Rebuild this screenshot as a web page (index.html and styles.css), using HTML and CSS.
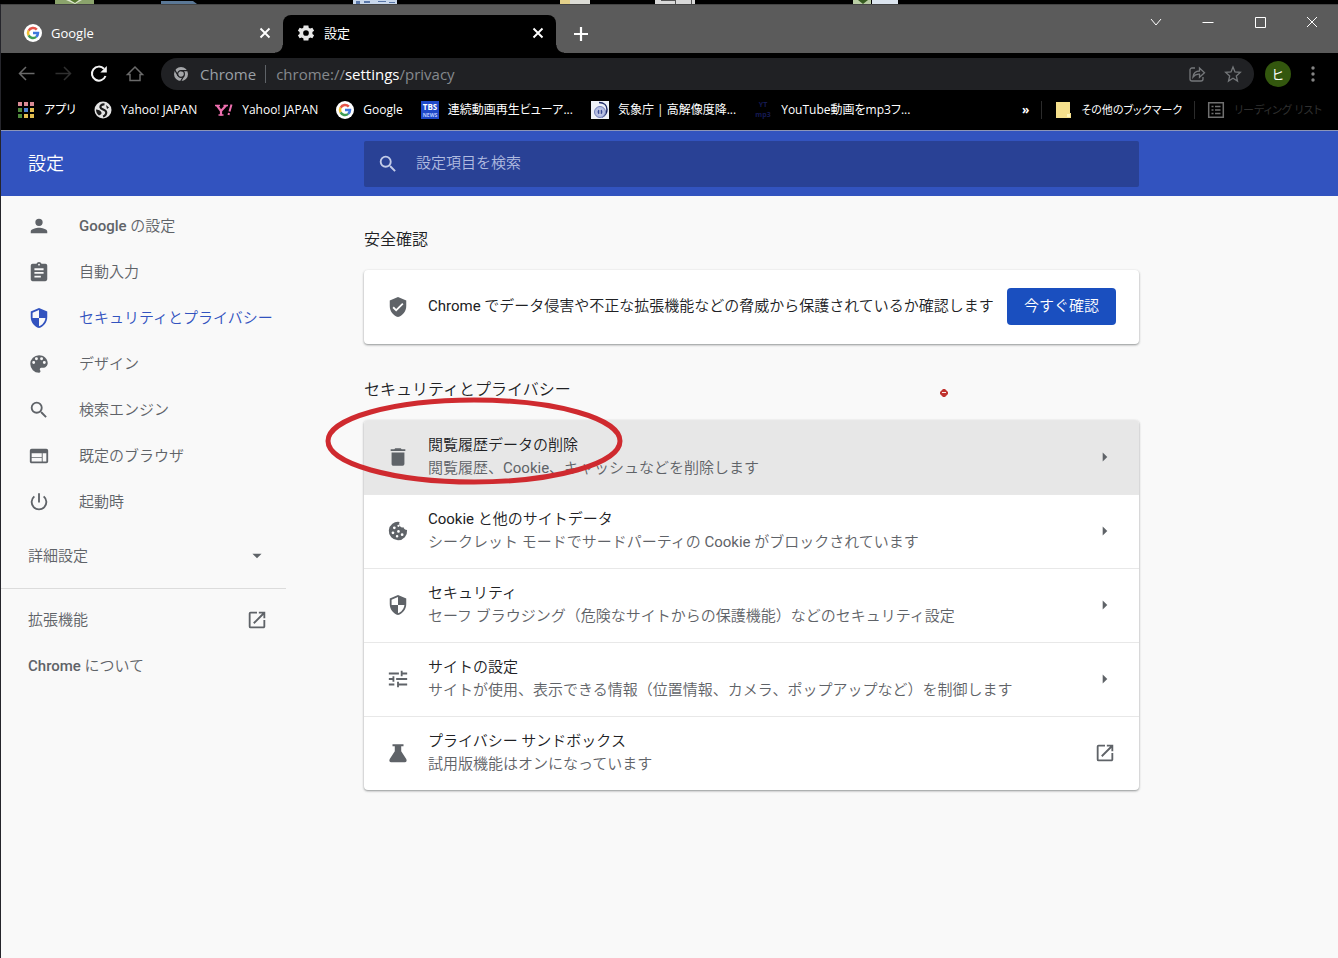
FILE: index.html
```html
<!DOCTYPE html>
<html lang="ja">
<head>
<meta charset="utf-8">
<title>設定</title>
<link rel="stylesheet" href="styles.css">
</head>
<body>
<svg class="defs" aria-hidden="true">
  <symbol id="google" viewBox="0 0 18 18">
    <circle cx="9" cy="9" r="9" fill="#fff"/>
    <g fill="none" stroke-width="2.5">
      <path d="M12.8 5.6A5 5 0 0 0 4.6 6.7" stroke="#e5554a"/>
      <path d="M4.6 6.7a5 5 0 0 0 0 4.7" stroke="#f0c030"/>
      <path d="M4.6 11.4a5 5 0 0 0 7.6 1.5" stroke="#3f9d55"/>
      <path d="M9 9.1h5a5 5 0 0 1-1.8 3.8" stroke="#3f78dd"/>
    </g>
  </symbol>
  <symbol id="close" viewBox="0 0 18 18"><path d="M4.500 4.500l9 9m0-9l-9 9" fill="none" stroke="currentColor" stroke-width="1.900"/></symbol>
  <symbol id="search" viewBox="0 0 24 24"><path d="M15.5 14h-.79l-.28-.27A6.47 6.47 0 0 0 16 9.5 6.5 6.5 0 1 0 9.5 16c1.61 0 3.09-.59 4.23-1.57l.27.28v.79l5 4.99L20.49 19l-4.99-5zm-6 0C7.01 14 5 11.99 5 9.5S7.01 5 9.5 5 14 7.01 14 9.5 11.99 14 9.5 14z"/></symbol>
  <symbol id="shield" viewBox="0 0 24 24"><path d="M12 1L3 5v6c0 5.55 3.84 10.74 9 12 5.16-1.26 9-6.45 9-12V5l-9-4zm0 10.99h7c-.53 4.12-3.28 7.79-7 8.94V12H5V6.3l7-3.11v8.8z"/></symbol>
  <symbol id="launch" viewBox="0 0 24 24"><path d="M19 19H5V5h7V3H5a2 2 0 0 0-2 2v14a2 2 0 0 0 2 2h14c1.1 0 2-.9 2-2v-7h-2v7zM14 3v2h3.59l-9.83 9.83 1.41 1.41L19 6.41V10h2V3h-7z"/></symbol>
  <symbol id="arrow" viewBox="0 0 24 24"><path d="M9.500 7l5 5-5 5z"/></symbol>
</svg>

<div class="desktop" aria-hidden="true">
  <svg width="900" height="4">
    <path fill="#8ba36c" d="M55 0h39v4H55z"/><path fill="#dfe8d0" d="M66 0h16l-7 4z"/><path fill="#55782f" d="M70 0h9l-4 3z"/>
    <path fill="#5b7896" d="M161 1h32l4 3h-36z"/>
    <path fill="#c9d8ec" d="M353 0h44v4h-44z"/><path fill="#5a77a8" d="M356 1h4v3h-4zm8 0h6v2h-6zm14 0h8v1h-8zm11 1h6v1h-6z"/>
    <path fill="#e3d08a" d="M560 0h10v4h-10z"/><path fill="#dcdcd6" d="M570 0h20v4h-20z"/>
    <path fill="#d8d8d8" d="M655 0h40v4h-40z"/><path fill="#555" d="M661 0h14v1h-14zm14 0h1v4h-1zm16 0h1v4h-1z"/>
    <path fill="#b9cda4" d="M853 0h18v4h-18z"/><path fill="#365b20" d="M858 0h10l-5 4z"/><path fill="#dbe4ee" d="M872 0h26v4h-26z"/>
  </svg>
</div>

<div class="window">
  <header class="chrome">
    <div class="tabstrip">
      <div class="tab">
        <svg class="favicon"><use href="#google"/></svg>
        <span class="tab-title">Google</span>
        <button class="tab-close" aria-label="閉じる"><svg><use href="#close"/></svg></button>
      </div>
      <div class="tab tab-active">
        <svg class="favicon" viewBox="0 0 24 24" fill="#e8e8e8"><path d="M20.500 13.200a8 8 0 0 0 0-2.400l2.300-1.800-2.300-4-2.800 1.100a8 8 0 0 0-2.100-1.200L15.200 2H8.800l-.4 2.900a8 8 0 0 0-2.100 1.200L3.500 5 1.200 9l2.300 1.800a8 8 0 0 0 0 2.400L1.200 15l2.300 4 2.800-1.100a8 8 0 0 0 2.100 1.200l.4 2.900h6.400l.4-2.900a8 8 0 0 0 2.100-1.200l2.800 1.100 2.300-4zM12 15.800a3.800 3.800 0 1 1 0-7.600 3.800 3.800 0 0 1 0 7.600z"/></svg>
        <span class="tab-title">設定</span>
        <button class="tab-close" aria-label="閉じる"><svg><use href="#close"/></svg></button>
      </div>
      <button class="new-tab" aria-label="新しいタブ"><svg viewBox="0 0 18 18"><path d="M9 2v14M2 9h14" stroke="#fff" stroke-width="2.200"/></svg></button>
      <div class="window-buttons">
        <button aria-label="タブを検索"><svg viewBox="0 0 14 14"><path d="M2 4l5 6 5-6"/></svg></button>
        <button aria-label="最小化"><svg viewBox="0 0 14 14"><path d="M1.500 7.500h11"/></svg></button>
        <button aria-label="最大化"><svg viewBox="0 0 14 14"><path d="M2.500 2.500h10v10h-10z"/></svg></button>
        <button aria-label="ウィンドウを閉じる"><svg viewBox="0 0 14 14"><path d="M2 2l10 10m0-10L2 12"/></svg></button>
      </div>
    </div>

    <div class="toolbar">
      <button class="tool" aria-label="戻る"><svg viewBox="0 0 20 20" stroke="#6a6a6a"><path d="M17.500 9.500h-15M9 3L2.500 9.500 9 16"/></svg></button>
      <button class="tool" aria-label="進む"><svg viewBox="0 0 20 20" stroke="#303030"><path d="M2.500 9.500h15M11 3l6.500 6.500L11 16"/></svg></button>
      <button class="tool" aria-label="再読み込み"><svg viewBox="0 0 20 20" stroke="#f4f4f4" stroke-width="2"><path d="M16.500 12a7 7 0 1 1-1.500-7.200"/><path d="M17.800 2v6.500h-6.500z" fill="#f4f4f4" stroke="none"/></svg></button>
      <button class="tool" aria-label="ホーム"><svg viewBox="0 0 20 20" stroke="#6a6a6a"><path d="M2.500 10.500L10 3l7.500 7.500h-2.500v6H5v-6z"/></svg></button>
      <div class="omnibox">
        <svg class="site-icon" viewBox="0 0 16 16"><circle cx="8" cy="8" r="7" fill="#a4a6a9"/><g stroke="#202124" stroke-width="1.200" fill="none"><circle cx="8" cy="8" r="3.400"/><path d="M8 4.600h7M5.100 9.700L1.600 3.600M10.900 9.700L7.400 15.800"/></g></svg>
        <span class="site-name">Chrome</span>
        <span class="url" role="textbox" aria-label="アドレス">chrome://<b>settings</b>/privacy</span>
        <button class="omni-button" aria-label="共有"><svg viewBox="0 0 18 18"><path d="M7 3H4a2 2 0 0 0-2 2v9a2 2 0 0 0 2 2h9a2 2 0 0 0 2-2v-2"/><path d="M5 12c.5-4 3-6 6.500-6V3l5 4.700-5 4.500v-3C8.500 9 6.500 10 5 12z"/></svg></button>
        <button class="omni-button" aria-label="ブックマーク"><svg viewBox="0 0 18 18"><path d="M9 2l2 5 5.300.4-4 3.500 1.200 5.200L9 13.300l-4.500 2.800 1.200-5.200-4-3.500L7 7z"/></svg></button>
      </div>
      <button class="avatar">ヒ</button>
      <button class="menu" aria-label="メニュー"><svg viewBox="0 0 18 18" fill="#858585"><circle cx="9" cy="3" r="1.700"/><circle cx="9" cy="9" r="1.700"/><circle cx="9" cy="15" r="1.700"/></svg></button>
    </div>

    <nav class="bookmarks">
      <a href="#"><svg viewBox="0 0 18 18"><path fill="#d98b95" d="M1 1h4v4H1zm6 0h4v4H7zm6 0h4v4h-4z"/><path fill="#4f8a3c" d="M1 7h4v4H1zm0 6h4v4H1z"/><path fill="#4a7fd0" d="M7 7h4v4H7z"/><path fill="#e2bd4f" d="M13 7h4v4h-4zm-6 6h4v4H7zm6 0h4v4h-4z"/></svg>アプリ</a>
      <a href="#"><svg viewBox="0 0 18 18"><circle cx="9" cy="9" r="8.500" fill="#e4e4e4"/><path fill="none" stroke="#1b1b1b" stroke-width="2.200" d="M10.500 3.500C8 3 6 4.500 6.500 6.500S11 8.500 12 10.500 11 15 9 15.500"/><path fill="#1b1b1b" d="M2 8.500c2 0 5 1 5.500 3S6 14 5 14.500C3 13 2 11 2 8.500zM12 4l3 2.500-2 1.500z"/></svg>Yahoo! JAPAN</a>
      <a href="#"><svg viewBox="0 0 18 18" fill="none" stroke="#ee6fae"><path stroke-width="2.200" d="M2 4.500l4 5.500v4.500M11 4.500L6 10"/><path stroke-width="1.400" d="M0 4.500h5M8.500 4.500h4.500M3.500 14h5"/><path stroke-width="2" d="M16.500 3.500l-2 7M14 12l-.5 2"/></svg>Yahoo! JAPAN</a>
      <a href="#"><svg><use href="#google"/></svg>Google</a>
      <a href="#"><svg viewBox="0 0 18 18"><path fill="#1f49c8" d="M0 0h18v18H0z"/><text x="9" y="9" class="tbs">TBS</text><text x="9" y="16" class="tbs-news">NEWS</text></svg>連続動画再生ビューア...</a>
      <a href="#"><svg viewBox="0 0 18 18"><path fill="#eef1f8" d="M0 0h18v18H0z"/><path d="M8 1.500c5 0 8 3 8 7s-2 6-5 7.500" fill="none" stroke="#1f2c69" stroke-width="1.500"/><circle cx="9" cy="11" r="5.500" fill="#b4bde2" stroke="#7380bb"/><circle cx="9" cy="11" r="2.400" fill="#3a4a94"/><path d="M9 8v6" stroke="#fff"/></svg>気象庁 | 高解像度降...</a>
      <a href="#"><svg viewBox="0 0 18 18"><text x="9" y="6" class="yt">YT</text><text x="9" y="16" class="yt">mp3</text></svg>YouTube動画をmp3フ...</a>
      <button class="overflow">»</button>
      <a class="other" href="#"><svg viewBox="0 0 18 18"><path fill="#f6e08c" d="M2 1h14v11h1v5H2z"/><path fill="#fff6bd" d="M13 13h3v3h-3z"/></svg>その他のブックマーク</a>
      <a class="other reading" href="#"><svg viewBox="0 0 18 18" fill="none" stroke="#707070" stroke-width="1.500"><path d="M1.700 1.700h14.600v14.600H1.700zM4.500 5.500h2M8 5.500h5.500M4.500 9h2M8 9h5.500M4.500 12.500h2M8 12.500h5.500"/></svg>リーディング リスト</a>
    </nav>
  </header>

  <div class="settings-bar grid">
    <h1>設定</h1>
    <label class="search"><svg class="icon"><use href="#search"/></svg><input type="search" placeholder="設定項目を検索" aria-label="設定項目を検索"></label>
  </div>

  <div class="page grid">
    <nav class="sidebar">
      <a href="#"><svg class="icon" viewBox="0 0 24 24"><path d="M12 12a4 4 0 1 0 0-8 4 4 0 0 0 0 8zm0 2c-2.700 0-9 1.300-9 4v2h18v-2c0-2.700-6.300-4-9-4z"/></svg><span><b>Google</b> の設定</span></a>
      <a href="#"><svg class="icon" viewBox="0 0 24 24"><path d="M19 3h-4.200a3 3 0 0 0-5.600 0H5a2 2 0 0 0-2 2v15c0 1.100.9 2 2 2h14a2 2 0 0 0 2-2V5a2 2 0 0 0-2-2zm-7 0a1 1 0 1 1 0 2 1 1 0 0 1 0-2zm2 15H7v-2h7v2zm3-4H7v-2h10v2zm0-4H7V8h10v2z"/></svg><span>自動入力</span></a>
      <a href="#" class="current"><svg class="icon"><use href="#shield"/></svg><span>セキュリティとプライバシー</span></a>
      <a href="#"><svg class="icon" viewBox="0 0 24 24"><path d="M12 2.500a9.500 9.500 0 0 0 0 19 1.600 1.600 0 0 0 1.200-2.700 1.600 1.600 0 0 1 1.200-2.600h2c2.900 0 5.100-2.400 5.100-5.200 0-4.700-4.300-8.500-9.500-8.500zM6.200 12a1.600 1.600 0 1 1 0-3.200 1.600 1.600 0 0 1 0 3.200zm3-4.200a1.600 1.600 0 1 1 0-3.200 1.600 1.600 0 0 1 0 3.200zm5.600 0a1.600 1.600 0 1 1 0-3.200 1.600 1.600 0 0 1 0 3.200zm3 4.200a1.600 1.600 0 1 1 0-3.200 1.600 1.600 0 0 1 0 3.200z"/></svg><span>デザイン</span></a>
      <a href="#"><svg class="icon"><use href="#search"/></svg><span>検索エンジン</span></a>
      <a href="#"><svg class="icon" viewBox="0 0 24 24"><path d="M20 4H4a2 2 0 0 0-2 2v12c0 1.100.9 2 2 2h16a2 2 0 0 0 2-2V6a2 2 0 0 0-2-2zm-5 14H4v-4h11v4zm0-5H4V9h11v4zm5 5h-4V9h4v9z"/></svg><span>既定のブラウザ</span></a>
      <a href="#"><svg class="icon" viewBox="0 0 24 24"><path d="M13 2.500h-2v10h2v-10zm4.800 2.700l-1.400 1.400a7 7 0 1 1-8.800 0L6.200 5.200a9 9 0 1 0 11.600 0z"/></svg><span>起動時</span></a>
      <button class="advanced">詳細設定<svg class="icon" viewBox="0 0 24 24"><path d="M7 9.500h10l-5 5z"/></svg></button>
      <hr>
      <a href="#" class="plain">拡張機能<svg class="icon"><use href="#launch"/></svg></a>
      <a href="#" class="plain"><span><b>Chrome</b> について</span></a>
    </nav>

    <main>
      <h2>安全確認</h2>
      <section class="card safety">
        <svg class="icon" viewBox="0 0 24 24"><path d="M12 1L3 5v6c0 5.550 3.840 10.740 9 12 5.160-1.260 9-6.450 9-12V5l-9-4zm-2 16l-4-4 1.410-1.410L10 14.170l6.590-6.590L18 9l-8 8z"/></svg>
        <p><span lang="en">Chrome</span> でデータ侵害や不正な拡張機能などの脅威から保護されているか確認します</p>
        <button class="primary">今すぐ確認</button>
      </section>

      <h2>セキュリティとプライバシー</h2>
      <section class="card rows">
        <button class="row hovered"><svg class="icon" viewBox="0 0 24 24"><path d="M5 19.500c0 1.100.9 2 2 2h10a2 2 0 0 0 2-2V7H5v12.500zM20 3.500h-4l-1-1H9l-1 1H4v2h16z"/></svg><span class="text"><span>閲覧履歴データの削除</span><small>閲覧履歴、<span lang="en">Cookie</span>、キャッシュなどを削除します</small></span><svg class="icon"><use href="#arrow"/></svg></button>
        <button class="row"><svg class="icon" viewBox="0 0 24 24"><path d="M21.900 11a4 4 0 0 1-3.900-3 4 4 0 0 1-4.300-5.800A10 10 0 1 0 21.900 11zM8 7a1.500 1.500 0 1 1 0 3 1.500 1.500 0 0 1 0-3zM6.500 15.500a1.500 1.500 0 1 1 0-3 1.500 1.500 0 0 1 0 3zm4.500 3.700a1.400 1.400 0 1 1 0-2.800 1.400 1.400 0 0 1 0 2.800zm1.500-5.200a1.500 1.500 0 1 1 0-3 1.500 1.500 0 0 1 0 3zm4 3.500a1.500 1.500 0 1 1 0-3 1.500 1.500 0 0 1 0 3zM12.500 7.500a1.200 1.200 0 1 1 0-2.400 1.200 1.200 0 0 1 0 2.400z"/></svg><span class="text"><span><span lang="en">Cookie</span> と他のサイトデータ</span><small>シークレット モードでサードパーティの <span lang="en">Cookie</span> がブロックされています</small></span><svg class="icon"><use href="#arrow"/></svg></button>
        <button class="row"><svg class="icon"><use href="#shield"/></svg><span class="text"><span>セキュリティ</span><small>セーフ ブラウジング（危険なサイトからの保護機能）などのセキュリティ設定</small></span><svg class="icon"><use href="#arrow"/></svg></button>
        <button class="row"><svg class="icon" viewBox="0 0 24 24"><path d="M2 17v2h6v-2H2zM2 5v2h11V5H2zm11 16v-2h9v-2h-9v-2h-2v6h2zM6 9v2H2v2h4v2h2V9H6zm16 4v-2H10v2h12zm-7-4h2V7h5V5h-5V3h-2v6z"/></svg><span class="text"><span>サイトの設定</span><small>サイトが使用、表示できる情報（位置情報、カメラ、ポップアップなど）を制御します</small></span><svg class="icon"><use href="#arrow"/></svg></button>
        <button class="row"><svg class="icon" viewBox="0 0 24 24"><path d="M6 2.500h12v2h-2.500v5.500L21 18.500c1 1.700.2 3.500-1.500 3.500h-15C2.800 22 2 20.200 3 18.500L8.500 10V4.500H6z"/></svg><span class="text"><span>プライバシー サンドボックス</span><small>試用版機能はオンになっています</small></span><svg class="icon"><use href="#launch"/></svg></button>
        <svg class="marker" viewBox="0 0 300 90" aria-hidden="true"><ellipse cx="150" cy="45" rx="146" ry="41"/></svg>
        <svg class="speck" viewBox="0 0 8 8" aria-hidden="true"><path fill="#c0332f" d="M3 0h2l3 3v2L5 8H3L0 5V3z"/><path fill="#fbe9e6" d="M2 3h4v1H2z"/></svg>
      </section>
    </main>
  </div>
</div>
</body>
</html>
```
FILE: styles.css
```css
* {
  box-sizing: border-box;
}

body {
  display: flex;
  flex-direction: column;
  min-height: 100vh;
  margin: 0;
  background: #000;
  color: #202124;
  font: 350 15px/23px Roboto, "Noto Sans CJK JP", sans-serif;
}

button,
input {
  margin: 0;
  padding: 0;
  border: 0;
  background: none;
  color: inherit;
  font: inherit;
}

a {
  color: inherit;
  text-decoration: none;
}

svg {
  display: block;
  flex: none;
}

[lang="en"] {
  font-weight: 400;
}

.defs {
  position: absolute;
  width: 0;
  height: 0;
}

.desktop {
  height: 4px;
  overflow: hidden;
}

.window {
  display: flex;
  flex: 1;
  flex-direction: column;
  border-left: 1px solid #25252b;
  background: #f9f9f9;
}

/* Browser frame */

.chrome {
  background: #000;
  color: #fff;
  font: 400 13px/18px "Open Sans", "Noto Sans CJK JP", sans-serif;
  font-feature-settings: "palt";
}

.tabstrip {
  display: flex;
  height: 49px;
  padding: 10px 0 0 9px;
  border-top: 1px solid #444;
  background: #5b5b5b;
}

.tab {
  position: relative;
  display: flex;
  flex: 0 1 273px;
  align-items: center;
  gap: 9px;
  padding: 0 9px 2px 14px;
}

.tab-active {
  border-radius: 8px 8px 0 0;
  background: #000;
}

.tab-active::before,
.tab-active::after {
  position: absolute;
  bottom: 0;
  width: 8px;
  height: 8px;
  content: "";
}

.tab-active::before {
  right: 100%;
  background: radial-gradient(circle at 0 0, transparent 7px, #000 8px);
}

.tab-active::after {
  left: 100%;
  background: radial-gradient(circle at 100% 0, transparent 7px, #000 8px);
}

.favicon,
.tab-close svg,
.new-tab svg {
  width: 18px;
  height: 18px;
}

.tab-title {
  flex: 1;
}

.new-tab {
  padding: 0 16px;
}

.window-buttons {
  display: flex;
  align-self: start;
  margin-left: auto;
}

.window-buttons button {
  display: grid;
  place-items: center;
  width: 52px;
  height: 12px;
}

.window-buttons svg {
  width: 14px;
  height: 14px;
  fill: none;
  stroke: #fff;
}

.toolbar {
  display: flex;
  align-items: center;
  height: 43px;
  padding: 0 16px 2px 8px;
}

.tool {
  display: grid;
  place-items: center;
  width: 36px;
  height: 36px;
}

.tool svg {
  width: 20px;
  height: 20px;
  fill: none;
  stroke-width: 1.5;
}

.tool svg[stroke-width] {
  stroke-width: 2;
}

.omnibox {
  display: flex;
  flex: 1;
  align-items: center;
  height: 32px;
  margin-left: 8px;
  padding: 0 12px;
  border-radius: 16px;
  background: #202124;
  color: #9aa0a6;
  font-size: 15px;
}

.site-icon {
  width: 16px;
  height: 16px;
}

.site-name {
  margin-left: 11px;
  padding-right: 9px;
  border-right: 1px solid #5f6368;
}

.url {
  flex: 1;
  margin-left: 10px;
  color: #85898d;
}

.url b {
  color: #fff;
  font-weight: 400;
}

.omni-button {
  margin-left: 18px;
}

.omni-button svg {
  width: 18px;
  height: 18px;
  fill: none;
  stroke: #74777a;
  stroke-width: 1.3;
}

.avatar {
  width: 26px;
  height: 26px;
  margin-left: 11px;
  border-radius: 50%;
  background: #33570e;
  text-align: center;
}

.menu {
  margin-left: 13px;
}

.menu svg {
  width: 18px;
  height: 18px;
}

.bookmarks {
  display: flex;
  align-items: center;
  gap: 18px;
  height: 35px;
  padding: 0 16px 6px;
  border-bottom: 1px solid #8c95b8;
  font-size: 12px;
  white-space: nowrap;
}

.bookmarks a {
  display: flex;
  align-items: center;
  gap: 9px;
}

.bookmarks svg {
  width: 18px;
  height: 18px;
}

.tbs,
.tbs-news,
.yt {
  fill: #fff;
  font-size: 8px;
  font-weight: 700;
  text-anchor: middle;
}

.tbs-news {
  fill: #b9c9ff;
  font-size: 5px;
}

.yt {
  fill: #151a52;
  font-size: 7px;
}

.overflow {
  margin-left: auto;
  font-weight: 700;
}

.bookmarks .other {
  margin: 0 -6px;
  padding-left: 12px;
  border-left: 1px solid #2b2b2b;
  font-size: 11px;
}

.bookmarks .reading {
  margin: 0;
  color: #303030;
}

/* Settings page */

.grid {
  display: grid;
  grid-template-columns: 363fr minmax(0, 775px) 199fr;
}

.icon {
  width: 22px;
  height: 22px;
  fill: #5f6368;
}

.settings-bar {
  align-items: center;
  height: 65px;
  background: #3253bf;
  color: #fff;
}

h1 {
  margin: 0;
  padding-left: 27px;
  font-size: 18px;
  font-weight: 350;
}

.search {
  display: flex;
  align-items: center;
  gap: 17px;
  height: 46px;
  padding: 0 13px;
  border-radius: 2px;
  background: #294195;
}

.search .icon {
  fill: #c3cce8;
}

.search input {
  flex: 1;
  outline: 0;
}

.search input::placeholder {
  color: #b0bbe0;
  opacity: 1;
}

.sidebar {
  width: 285px;
  padding-top: 7px;
  color: #5f6368;
  white-space: nowrap;
}

.sidebar a,
.advanced {
  display: flex;
  align-items: center;
  gap: 29px;
  width: 100%;
  height: 46px;
  padding: 0 18px 0 27px;
}

.sidebar b {
  font-weight: 500;
}

.sidebar .current {
  color: #3253bf;
}

.current .icon {
  fill: #3253bf;
}

.advanced {
  margin-top: 8px;
}

.advanced,
.sidebar .plain {
  justify-content: space-between;
}

hr {
  margin: 9px 0 8px;
  border: 0;
  border-top: 1px solid #dcdcdc;
}

main {
  padding-top: 32px;
}

h2 {
  margin: 0 0 18px;
  font-size: 16px;
  font-weight: 350;
  line-height: 24px;
}

.card {
  position: relative;
  margin-bottom: 34px;
  border-radius: 4px;
  background: #fff;
  box-shadow: 0 1px 2px rgba(60, 64, 67, 0.4), 0 1px 3px rgba(60, 64, 67, 0.2);
}

.safety {
  display: flex;
  align-items: center;
  gap: 19px;
  min-height: 74px;
  padding: 0 23px 1px;
}

.safety p {
  flex: 1;
  margin: 0 -8px 0 0;
}

.primary {
  height: 37px;
  padding: 0 17px;
  border-radius: 4px;
  background: #1a4fbf;
  color: #fff;
  white-space: nowrap;
}

.row {
  display: flex;
  align-items: center;
  gap: 19px;
  width: 100%;
  min-height: 74px;
  padding: 0 23px 2px;
  border-top: 1px solid #e8e8e8;
  text-align: left;
}

.hovered {
  border-radius: 4px 4px 0 0;
  background: #e7e7e7;
}

.text {
  display: flex;
  flex: 1;
  flex-direction: column;
}

.text small {
  color: #5f6368;
  font-size: 15px;
}

.marker {
  position: absolute;
  top: -24px;
  left: -40px;
  width: 300px;
  height: 90px;
  fill: none;
  stroke: #cf2a2f;
  stroke-width: 5;
  pointer-events: none;
}

.speck {
  position: absolute;
  top: -31px;
  left: 576px;
  width: 8px;
  height: 8px;
}
```
